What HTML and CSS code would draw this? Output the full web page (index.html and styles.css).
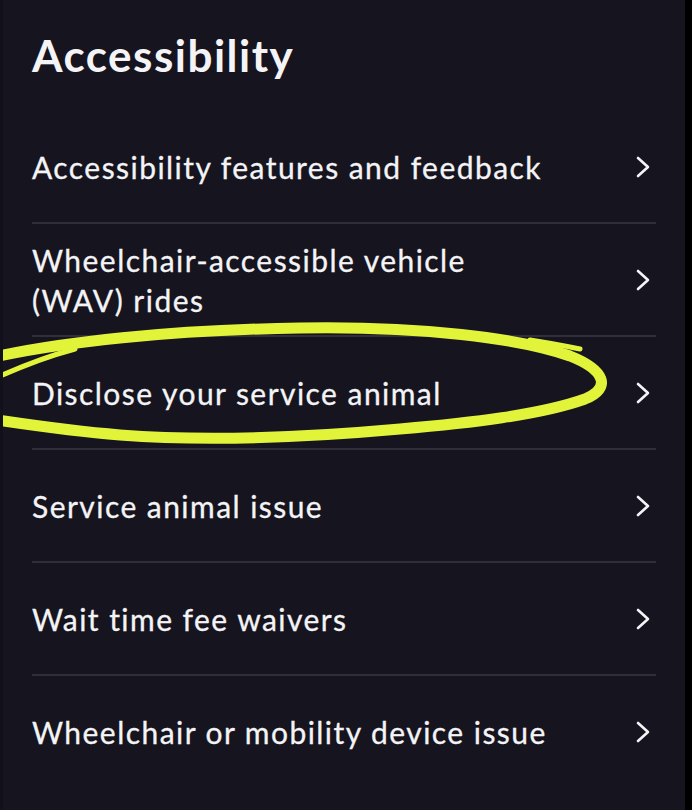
FILE: index.html
```html
<!DOCTYPE html>
<html lang="en">
<head>
<meta charset="utf-8">
<title>Accessibility</title>
<link rel="stylesheet" href="styles.css">
</head>
<body>
<div class="screen">
  <header class="header">
    <h1 class="title">Accessibility</h1>
  </header>
  <ul class="menu">
    <li class="row"><span class="label">Accessibility features and feedback</span><svg class="chev" viewBox="0 0 14 22" width="14" height="22"><polyline points="2,2 12,11 2,20"/></svg></li>
    <li class="row"><span class="label">Wheelchair-accessible vehicle<br>(WAV) rides</span><svg class="chev" viewBox="0 0 14 22" width="14" height="22"><polyline points="2,2 12,11 2,20"/></svg></li>
    <li class="row"><span class="label">Disclose your service animal</span><svg class="chev" viewBox="0 0 14 22" width="14" height="22"><polyline points="2,2 12,11 2,20"/></svg></li>
    <li class="row"><span class="label">Service animal issue</span><svg class="chev" viewBox="0 0 14 22" width="14" height="22"><polyline points="2,2 12,11 2,20"/></svg></li>
    <li class="row"><span class="label">Wait time fee waivers</span><svg class="chev" viewBox="0 0 14 22" width="14" height="22"><polyline points="2,2 12,11 2,20"/></svg></li>
    <li class="row"><span class="label">Wheelchair or mobility device issue</span><svg class="chev" viewBox="0 0 14 22" width="14" height="22"><polyline points="2,2 12,11 2,20"/></svg></li>
  </ul>
  <svg class="circle" viewBox="0 0 692 810" width="692" height="810">
    <path class="ink" d="M -10 358 C 60 342, 170 330, 300 328 C 420 326, 520 338, 570 356 C 605 370, 612 388, 585 399 C 540 415, 470 423, 400 429 C 300 438, 200 441, 120 435 C 70 431, 30 425, -10 419"/>
    <path class="ink thin" d="M -4 378 C 20 367, 45 357, 75 349"/>
    <path class="ink thin" d="M 530 340 C 550 343, 565 346, 580 349"/>
  </svg>
</div>
</body>
</html>
```

FILE: styles.css
```css
html, body {
  margin: 0;
  padding: 0;
  background: #000;
}

.screen {
  position: relative;
  width: 685px;
  height: 810px;
  background: #16151f;
  border-left: 3px solid #121119;
  box-sizing: border-box;
  overflow: hidden;
  font-family: "Lato", "Open Sans", sans-serif;
  color: #f4f4f6;
}

.header {
  padding: 29px 0 29px 29px;
}

.title {
  margin: 0;
  font-size: 44px;
  line-height: 53px;
  font-weight: 700;
  letter-spacing: 1.5px;
}

.menu {
  list-style: none;
  margin: 0 0 0 29px;
  padding: 0;
  width: 624px;
}

.row {
  display: flex;
  align-items: center;
  justify-content: space-between;
  height: 111px;
  padding-right: 6px;
  border-bottom: 2px solid #302f39;
}

.row:last-child {
  border-bottom: none;
}

.label {
  font-size: 30px;
  line-height: 40px;
  font-weight: 400;
  letter-spacing: 1.45px;
  -webkit-text-stroke: 0.3px #f4f4f6;
}

.chev {
  flex: none;
  fill: none;
  stroke: #f4f4f6;
  stroke-width: 2.6;
  stroke-linecap: round;
  stroke-linejoin: round;
}

.circle {
  position: absolute;
  left: -3px;
  top: 0;
  pointer-events: none;
}

.ink {
  fill: none;
  stroke: #e2f43a;
  stroke-width: 11;
  stroke-linecap: round;
  stroke-linejoin: round;
}

.ink.thin {
  stroke-width: 5;
}
```
